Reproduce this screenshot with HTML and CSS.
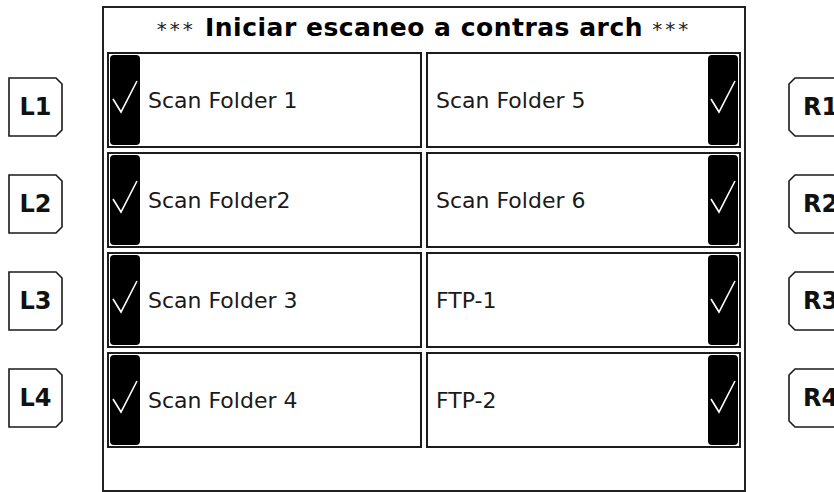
FILE: index.html
```html
<!DOCTYPE html>
<html lang="es">
<head>
<meta charset="utf-8">
<title>Iniciar escaneo</title>
<link rel="stylesheet" href="styles.css">
</head>
<body>
<div class="screen">
  <div class="side side-left">
    <div class="key key-l"><svg class="key-outline" viewBox="0 0 55 60" preserveAspectRatio="none"><polygon points="1,1 48,1 54,7 54,53 48,59 1,59"/></svg><span class="key-text">L1</span></div>
    <div class="key key-l"><svg class="key-outline" viewBox="0 0 55 60" preserveAspectRatio="none"><polygon points="1,1 48,1 54,7 54,53 48,59 1,59"/></svg><span class="key-text">L2</span></div>
    <div class="key key-l"><svg class="key-outline" viewBox="0 0 55 60" preserveAspectRatio="none"><polygon points="1,1 48,1 54,7 54,53 48,59 1,59"/></svg><span class="key-text">L3</span></div>
    <div class="key key-l"><svg class="key-outline" viewBox="0 0 55 60" preserveAspectRatio="none"><polygon points="1,1 48,1 54,7 54,53 48,59 1,59"/></svg><span class="key-text">L4</span></div>
  </div>

  <div class="panel">
    <div class="title"><span class="ast">***</span> Iniciar escaneo a contras arch <span class="ast">***</span></div>
    <div class="grid">
      <div class="cell"><span class="chk"><svg viewBox="0 0 30 90"><polyline points="3,44 11,57 27,26"/></svg></span><span class="lbl">Scan Folder 1</span></div>
      <div class="cell cell-r"><span class="lbl">Scan Folder 5</span><span class="chk"><svg viewBox="0 0 30 90"><polyline points="3,44 11,57 27,26"/></svg></span></div>

      <div class="cell"><span class="chk"><svg viewBox="0 0 30 90"><polyline points="3,44 11,57 27,26"/></svg></span><span class="lbl">Scan Folder2</span></div>
      <div class="cell cell-r"><span class="lbl">Scan Folder 6</span><span class="chk"><svg viewBox="0 0 30 90"><polyline points="3,44 11,57 27,26"/></svg></span></div>

      <div class="cell"><span class="chk"><svg viewBox="0 0 30 90"><polyline points="3,44 11,57 27,26"/></svg></span><span class="lbl">Scan Folder 3</span></div>
      <div class="cell cell-r"><span class="lbl">FTP-1</span><span class="chk"><svg viewBox="0 0 30 90"><polyline points="3,44 11,57 27,26"/></svg></span></div>

      <div class="cell"><span class="chk"><svg viewBox="0 0 30 90"><polyline points="3,44 11,57 27,26"/></svg></span><span class="lbl">Scan Folder 4</span></div>
      <div class="cell cell-r"><span class="lbl">FTP-2</span><span class="chk"><svg viewBox="0 0 30 90"><polyline points="3,44 11,57 27,26"/></svg></span></div>
    </div>
  </div>

  <div class="side side-right">
    <div class="key key-r"><svg class="key-outline" viewBox="0 0 55 60" preserveAspectRatio="none"><polygon points="54,1 7,1 1,7 1,53 7,59 54,59"/></svg><span class="key-text">R1</span></div>
    <div class="key key-r"><svg class="key-outline" viewBox="0 0 55 60" preserveAspectRatio="none"><polygon points="54,1 7,1 1,7 1,53 7,59 54,59"/></svg><span class="key-text">R2</span></div>
    <div class="key key-r"><svg class="key-outline" viewBox="0 0 55 60" preserveAspectRatio="none"><polygon points="54,1 7,1 1,7 1,53 7,59 54,59"/></svg><span class="key-text">R3</span></div>
    <div class="key key-r"><svg class="key-outline" viewBox="0 0 55 60" preserveAspectRatio="none"><polygon points="54,1 7,1 1,7 1,53 7,59 54,59"/></svg><span class="key-text">R4</span></div>
  </div>
</div>
</body>
</html>
```

FILE: styles.css
```css
html, body {
  margin: 0;
  padding: 0;
  background: #ffffff;
}

body {
  font-family: "DejaVu Sans", "Liberation Sans", sans-serif;
  color: #111111;
}

.screen {
  display: flex;
  width: 834px;
  height: 492px;
  overflow: hidden;
}

/* side soft keys */
.side {
  display: flex;
  flex-direction: column;
  gap: 37px;
  padding-top: 77px;
  box-sizing: border-box;
  flex: none;
}

.side-left {
  width: 102px;
  padding-left: 8px;
}

.side-right {
  width: 88px;
  padding-left: 42px;
}

.key {
  position: relative;
  width: 55px;
  height: 60px;
  display: flex;
  align-items: center;
  box-sizing: border-box;
  flex: none;
}

.key-l {
  justify-content: center;
}

.key-r {
  padding-left: 15px;
}

.key-outline {
  position: absolute;
  left: 0;
  top: 0;
  width: 100%;
  height: 100%;
  overflow: visible;
}

.key-outline polygon {
  fill: #ffffff;
  stroke: #1a1a1a;
  stroke-width: 1.6;
}

.key-text {
  position: relative;
  font-weight: bold;
  font-size: 24px;
  line-height: 1;
  color: #111111;
  white-space: nowrap;
}

/* main panel */
.panel {
  flex: none;
  width: 644px;
  height: 486px;
  margin-top: 6px;
  border: 2px solid #222222;
  box-sizing: border-box;
  display: flex;
  flex-direction: column;
}

.title {
  height: 44px;
  line-height: 40px;
  padding-bottom: 4px;
  box-sizing: border-box;
  text-align: center;
  font-weight: bold;
  font-size: 25px;
  letter-spacing: 0.5px;
  color: #000000;
  white-space: nowrap;
}

.ast {
  font-weight: normal;
  font-size: 20px;
  letter-spacing: 3px;
  color: #222222;
}

.grid {
  display: grid;
  grid-template-columns: 315px 315px;
  grid-auto-rows: 96px;
  column-gap: 4px;
  row-gap: 4px;
  padding: 0 3px;
}

.cell {
  display: flex;
  align-items: stretch;
  border: 2px solid #1c1c1c;
  box-sizing: border-box;
}

.chk {
  flex: none;
  width: 30px;
  margin: 1px;
  background: #000000;
  border-radius: 4px;
  display: flex;
  align-items: center;
  justify-content: center;
}

.chk svg {
  width: 30px;
  height: 90px;
}

.chk polyline {
  fill: none;
  stroke: #ffffff;
  stroke-width: 1.6;
  stroke-linejoin: miter;
}

.lbl {
  flex: 1;
  display: flex;
  align-items: center;
  padding-left: 7px;
  font-size: 22px;
  color: #1a1a1a;
  white-space: nowrap;
}

.cell-r .lbl {
  padding-left: 8px;
}
```
